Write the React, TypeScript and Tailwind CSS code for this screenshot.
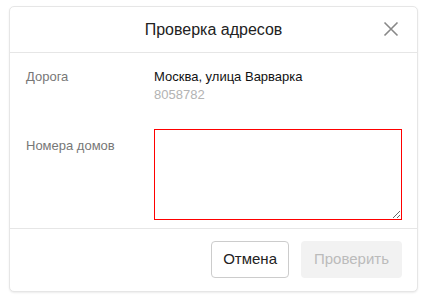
export default function App() {
  return (
    <div
      className="min-h-[301px] w-[425px] bg-white pl-[9px] pt-[6px]"
      style={{ fontFamily: '"Liberation Sans", Arial, sans-serif' }}
    >
      <div className="flex h-[286px] w-[409px] flex-col rounded-[5px] border border-[#e6e6e6] bg-white shadow-[0_1px_2px_rgba(0,0,0,0.08)]">
        {/* header */}
        <div className="relative flex h-[46px] shrink-0 items-center justify-center border-b border-[#e6e6e6]">
          <h1 className="text-[16px] text-[#222]">Проверка адресов</h1>
          <button className="absolute right-[18px] top-[14px] flex h-[16px] w-[16px] items-center justify-center text-[#888]">
            <svg width="16" height="16" viewBox="0 0 16 16" fill="none" stroke="currentColor" strokeWidth="1.6">
              <path d="M1.5 1.5l13 13M14.5 1.5l-13 13" />
            </svg>
          </button>
        </div>

        {/* body */}
        <div className="flex h-[176px] shrink-0 flex-col gap-[25px] border-b border-[#e6e6e6] pl-[16px] pt-[15px]">
          <div className="flex">
            <div className="w-[128px] text-[13px] leading-[18px] text-[#777]">Дорога</div>
            <div className="flex flex-col">
              <span className="text-[13px] leading-[18px] text-[#111]">Москва, улица Варварка</span>
              <span className="text-[13px] leading-[18px] text-[#b3b3b3]">8058782</span>
            </div>
          </div>
          <div className="flex">
            <div className="w-[128px] pt-[8px] text-[13px] leading-[18px] text-[#777]">Номера домов</div>
            <textarea className="h-[91px] w-[248px] resize-y border border-[#f00] outline-none" />
          </div>
        </div>

        {/* footer */}
        <div className="flex flex-1 items-start justify-end gap-[12px] pr-[15px] pt-[12px]">
          <button className="h-[37px] rounded-[4px] border border-[#ccc] bg-white px-[11px] text-[15px] text-[#222]">
            Отмена
          </button>
          <button
            disabled
            className="h-[37px] w-[101px] rounded-[4px] bg-[#f2f2f2] text-[15px] text-[#bbb]"
          >
            Проверить
          </button>
        </div>
      </div>
    </div>
  );
}
